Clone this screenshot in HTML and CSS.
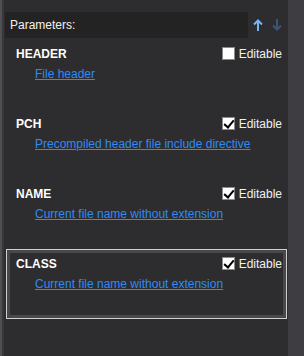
FILE: index.html
```html
<!DOCTYPE html>
<html lang="en">
<head>
  <meta charset="UTF-8" />
  <title>Parameters</title>
  <link rel="stylesheet" href="styles.css">
</head>
<body>

<div class="edge"></div>

<div class="panel">
  <div class="toolbar">
    <div class="toolbar-title">Parameters:</div>
    <div class="arrows">
      <svg class="arrow up" width="10" height="12" viewBox="0 0 10 12">
        <path d="M5 1.5 L5 12 M1 5.5 L5 1.5 L9 5.5" fill="none" stroke="currentColor" stroke-width="2"/>
      </svg>
      <svg class="arrow down" width="10" height="12" viewBox="0 0 10 12">
        <path d="M5 0 L5 10.5 M1 6.5 L5 10.5 L9 6.5" fill="none" stroke="currentColor" stroke-width="2"/>
      </svg>
    </div>
  </div>

  <div class="param">
    <div class="param-row">
      <span class="param-name">HEADER</span>
      <label class="editable"><span class="check"></span>Editable</label>
    </div>
    <a class="param-desc">File header</a>
  </div>

  <div class="param">
    <div class="param-row">
      <span class="param-name">PCH</span>
      <label class="editable"><span class="check checked"></span>Editable</label>
    </div>
    <a class="param-desc">Precompiled header file include directive</a>
  </div>

  <div class="param">
    <div class="param-row">
      <span class="param-name">NAME</span>
      <label class="editable"><span class="check checked"></span>Editable</label>
    </div>
    <a class="param-desc">Current file name without extension</a>
  </div>

  <div class="param selected">
    <div class="param-row">
      <span class="param-name">CLASS</span>
      <label class="editable"><span class="check checked"></span>Editable</label>
    </div>
    <a class="param-desc">Current file name without extension</a>
  </div>
</div>

<div class="side"></div>

</body>
</html>
```

FILE: styles.css
```css
:root {
  --bg: #2d2d30;
  --bar: #232324;
  --side: #3e3e42;
  --text: #f1f1f1;
  --link: #2b8cf7;
}

body {
  margin: 0;
  height: 356px;
  display: flex;
  background: var(--bg);
  font-family: 'Segoe UI', 'Liberation Sans', Arial, sans-serif;
  font-size: 12px;
  color: var(--text);
  overflow: hidden;
}

.edge {
  width: 5px;
  flex-shrink: 0;
  background: linear-gradient(to right, #505054 0, #505054 2px, #38383b 2px, #38383b 4px, var(--bg) 4px);
}

.panel {
  width: 283px;
  flex-shrink: 0;
  padding-top: 12px;
}

.side {
  flex: 1;
  background: var(--side);
}

/* Toolbar */
.toolbar {
  display: flex;
  height: 26px;
}

.toolbar-title {
  width: 238px;
  padding-left: 5px;
  background: var(--bar);
  line-height: 26px;
}

.arrows {
  flex: 1;
  display: flex;
  align-items: center;
  gap: 9px;
  padding-left: 5px;
}

.arrow.up {
  color: #78b3f2;
}

.arrow.down {
  color: #3d5670;
}

/* Parameter items */
.param {
  height: 70px;
  margin: 1px 1px 0;
  box-sizing: border-box;
  border: 1px solid transparent;
  padding: 6px 4px 0 9px;
}

.param + .param {
  margin-top: 0;
}

.param.selected {
  border-color: #cfcfcf;
  box-shadow: inset 0 0 0 3px #48484c;
}

.param-row {
  display: flex;
  justify-content: space-between;
  align-items: center;
  height: 15px;
}

.param-name {
  font-weight: bold;
  color: #fff;
}

.editable {
  display: flex;
  align-items: center;
  gap: 4px;
}

.check {
  width: 11px;
  height: 11px;
  background: #fff;
  border: 1px solid #8a8a8a;
  position: relative;
}

.check.checked::after {
  content: '';
  position: absolute;
  left: 3px;
  top: 0;
  width: 4px;
  height: 8px;
  border: solid #000;
  border-width: 0 2px 2px 0;
  transform: rotate(40deg);
}

.param-desc {
  display: inline-block;
  margin: 6px 0 0 19px;
  color: var(--link);
  text-decoration: underline;
  line-height: 15px;
}
```
